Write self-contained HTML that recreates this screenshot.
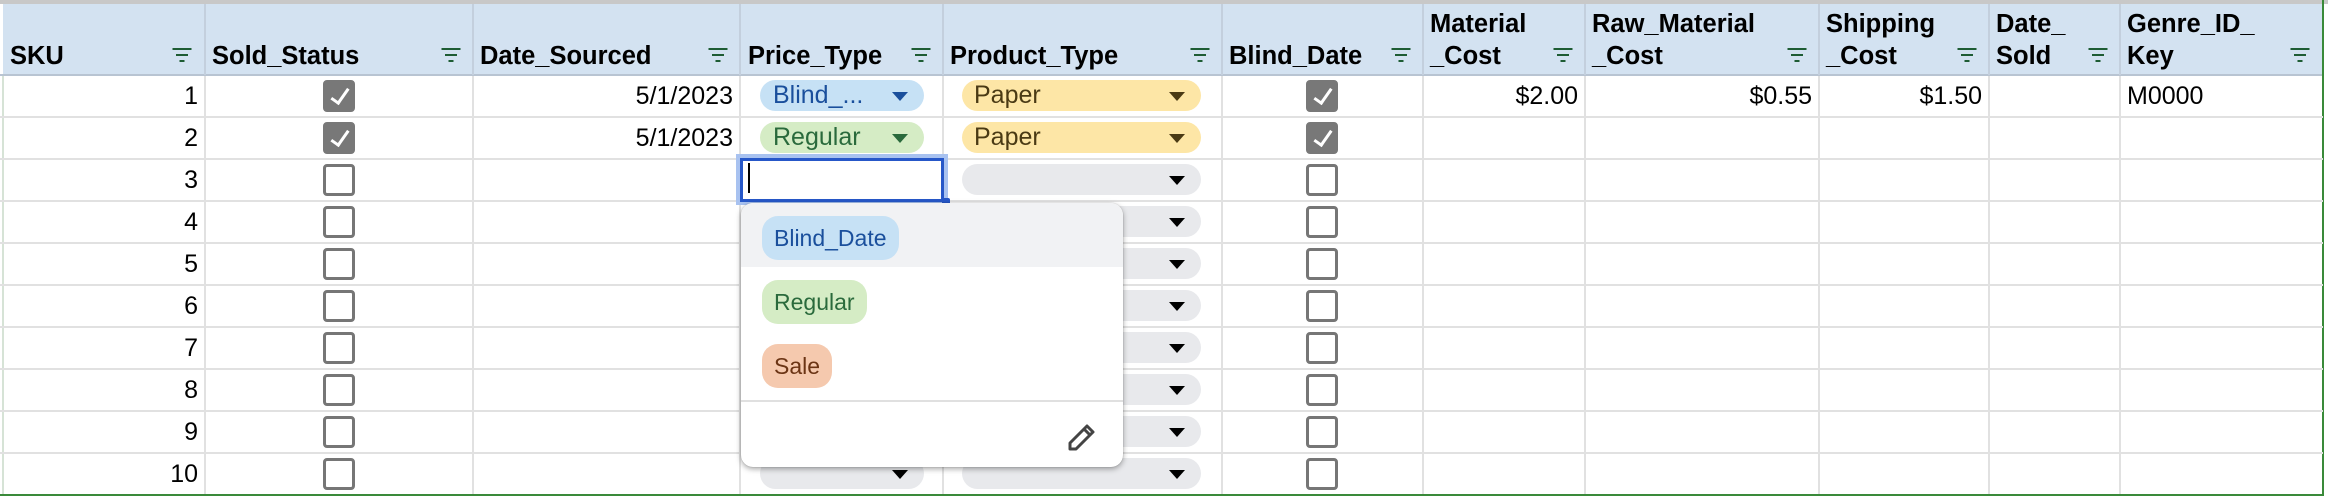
<!DOCTYPE html>
<html><head><meta charset="utf-8"><style>
*{margin:0;padding:0;box-sizing:border-box}
body{width:2328px;height:502px;background:#fff;position:relative;overflow:hidden;font-family:"Liberation Sans",Arial,sans-serif;color:#000}
.a{position:absolute}
.hd{position:absolute;top:4px;height:71px;background:#d3e2f1}
.ht{position:absolute;font-weight:bold;font-size:25.5px;line-height:32px;white-space:nowrap}
.f{position:absolute;top:48px;width:20px;height:14px}
.f i{position:absolute;height:2px;background:#1e5c34;left:50%;transform:translateX(-50%)}
.vl{position:absolute;width:2px;background:#e1e1e1}
.hl{position:absolute;height:2px;background:#e1e1e1;left:0;width:2323px}
.cb{position:absolute;width:32px;height:32px;border:3px solid #767676;border-radius:4px;background:#fff}
.cb.on{background:#787878;border-color:#787878}
.cb.on:after{content:"";position:absolute;left:9px;top:2px;width:7px;height:16px;border-right:3px solid #fff;border-bottom:3px solid #fff;transform:rotate(35deg)}
.t{position:absolute;font-size:25px;line-height:42px;white-space:nowrap}
.chip{position:absolute;height:31px;border-radius:16px;font-size:25px;line-height:31px;white-space:nowrap;padding-left:14px}
.chip b{position:absolute;right:16px;top:12px;width:0;height:0;border-left:8px solid transparent;border-right:8px solid transparent;border-top:9px solid currentColor}
.g{background:#e8e9ec;color:#000}
.pc{position:absolute;border-radius:16px;height:44px;font-size:23px;line-height:44px;padding:0 12px}
</style></head><body>
<div class="a" style="left:0;top:0;width:2328px;height:4px;background:#c8c8c8"></div>
<div class="hd" style="left:3px;width:2320px"></div>
<div class="a" style="left:0;top:74px;width:2323px;height:2px;background:#b8c4d2"></div>
<div class="a" style="left:204px;top:4px;width:2px;height:71px;background:#c3cfdd"></div>
<div class="a" style="left:472px;top:4px;width:2px;height:71px;background:#c3cfdd"></div>
<div class="a" style="left:739px;top:4px;width:2px;height:71px;background:#c3cfdd"></div>
<div class="a" style="left:942px;top:4px;width:2px;height:71px;background:#c3cfdd"></div>
<div class="a" style="left:1221px;top:4px;width:2px;height:71px;background:#c3cfdd"></div>
<div class="a" style="left:1422px;top:4px;width:2px;height:71px;background:#c3cfdd"></div>
<div class="a" style="left:1584px;top:4px;width:2px;height:71px;background:#c3cfdd"></div>
<div class="a" style="left:1818px;top:4px;width:2px;height:71px;background:#c3cfdd"></div>
<div class="a" style="left:1988px;top:4px;width:2px;height:71px;background:#c3cfdd"></div>
<div class="a" style="left:2119px;top:4px;width:2px;height:71px;background:#c3cfdd"></div>
<div class="ht" style="left:10px;top:40px">SKU</div>
<div class="ht" style="left:212px;top:40px">Sold_Status</div>
<div class="ht" style="left:480px;top:40px">Date_Sourced</div>
<div class="ht" style="left:748px;top:40px">Price_Type</div>
<div class="ht" style="left:950px;top:40px">Product_Type</div>
<div class="ht" style="left:1229px;top:40px">Blind_Date</div>
<div class="ht" style="left:1430px;top:8px">Material<br>_Cost</div>
<div class="ht" style="left:1592px;top:8px">Raw_Material<br>_Cost</div>
<div class="ht" style="left:1826px;top:8px">Shipping<br>_Cost</div>
<div class="ht" style="left:1996px;top:8px">Date_<br>Sold</div>
<div class="ht" style="left:2127px;top:8px">Genre_ID_<br>Key</div>
<div class="f" style="left:172px"><i style="top:0;width:19px"></i><i style="top:6px;width:12px"></i><i style="top:12px;width:5px"></i></div>
<div class="f" style="left:441px"><i style="top:0;width:19px"></i><i style="top:6px;width:12px"></i><i style="top:12px;width:5px"></i></div>
<div class="f" style="left:708px"><i style="top:0;width:19px"></i><i style="top:6px;width:12px"></i><i style="top:12px;width:5px"></i></div>
<div class="f" style="left:911px"><i style="top:0;width:19px"></i><i style="top:6px;width:12px"></i><i style="top:12px;width:5px"></i></div>
<div class="f" style="left:1190px"><i style="top:0;width:19px"></i><i style="top:6px;width:12px"></i><i style="top:12px;width:5px"></i></div>
<div class="f" style="left:1391px"><i style="top:0;width:19px"></i><i style="top:6px;width:12px"></i><i style="top:12px;width:5px"></i></div>
<div class="f" style="left:1553px"><i style="top:0;width:19px"></i><i style="top:6px;width:12px"></i><i style="top:12px;width:5px"></i></div>
<div class="f" style="left:1787px"><i style="top:0;width:19px"></i><i style="top:6px;width:12px"></i><i style="top:12px;width:5px"></i></div>
<div class="f" style="left:1957px"><i style="top:0;width:19px"></i><i style="top:6px;width:12px"></i><i style="top:12px;width:5px"></i></div>
<div class="f" style="left:2088px"><i style="top:0;width:19px"></i><i style="top:6px;width:12px"></i><i style="top:12px;width:5px"></i></div>
<div class="f" style="left:2290px"><i style="top:0;width:19px"></i><i style="top:6px;width:12px"></i><i style="top:12px;width:5px"></i></div>
<div class="vl" style="left:2px;top:76px;height:420px;background:#d6e3d6"></div>
<div class="vl" style="left:204px;top:76px;height:420px"></div>
<div class="vl" style="left:472px;top:76px;height:420px"></div>
<div class="vl" style="left:739px;top:76px;height:420px"></div>
<div class="vl" style="left:942px;top:76px;height:420px"></div>
<div class="vl" style="left:1221px;top:76px;height:420px"></div>
<div class="vl" style="left:1422px;top:76px;height:420px"></div>
<div class="vl" style="left:1584px;top:76px;height:420px"></div>
<div class="vl" style="left:1818px;top:76px;height:420px"></div>
<div class="vl" style="left:1988px;top:76px;height:420px"></div>
<div class="vl" style="left:2119px;top:76px;height:420px"></div>
<div class="vl" style="left:2322px;top:0;height:496px;background:#3a8a3a"></div>
<div class="hl" style="top:116px"></div>
<div class="hl" style="top:158px"></div>
<div class="hl" style="top:200px"></div>
<div class="hl" style="top:242px"></div>
<div class="hl" style="top:284px"></div>
<div class="hl" style="top:326px"></div>
<div class="hl" style="top:368px"></div>
<div class="hl" style="top:410px"></div>
<div class="hl" style="top:452px"></div>
<div class="a" style="left:0;top:494px;width:2324px;height:2px;background:#3a8a3a"></div>
<div class="t" style="right:2130px;top:75px">1</div>
<div class="t" style="right:2130px;top:117px">2</div>
<div class="t" style="right:2130px;top:159px">3</div>
<div class="t" style="right:2130px;top:201px">4</div>
<div class="t" style="right:2130px;top:243px">5</div>
<div class="t" style="right:2130px;top:285px">6</div>
<div class="t" style="right:2130px;top:327px">7</div>
<div class="t" style="right:2130px;top:369px">8</div>
<div class="t" style="right:2130px;top:411px">9</div>
<div class="t" style="right:2130px;top:453px">10</div>
<div class="cb on" style="left:323px;top:80px"></div>
<div class="cb on" style="left:323px;top:122px"></div>
<div class="cb" style="left:323px;top:164px"></div>
<div class="cb" style="left:323px;top:206px"></div>
<div class="cb" style="left:323px;top:248px"></div>
<div class="cb" style="left:323px;top:290px"></div>
<div class="cb" style="left:323px;top:332px"></div>
<div class="cb" style="left:323px;top:374px"></div>
<div class="cb" style="left:323px;top:416px"></div>
<div class="cb" style="left:323px;top:458px"></div>
<div class="cb on" style="left:1306px;top:80px"></div>
<div class="cb on" style="left:1306px;top:122px"></div>
<div class="cb" style="left:1306px;top:164px"></div>
<div class="cb" style="left:1306px;top:206px"></div>
<div class="cb" style="left:1306px;top:248px"></div>
<div class="cb" style="left:1306px;top:290px"></div>
<div class="cb" style="left:1306px;top:332px"></div>
<div class="cb" style="left:1306px;top:374px"></div>
<div class="cb" style="left:1306px;top:416px"></div>
<div class="cb" style="left:1306px;top:458px"></div>
<div class="t" style="right:1595px;top:75px">5/1/2023</div>
<div class="t" style="right:1595px;top:117px">5/1/2023</div>
<div class="t" style="right:750px;top:75px">$2.00</div>
<div class="t" style="right:516px;top:75px">$0.55</div>
<div class="t" style="right:346px;top:75px">$1.50</div>
<div class="t" style="left:2127px;top:75px">M0000</div>
<div class="chip" style="left:760px;top:80px;width:164px;background:#c6e1f5;color:#1a4f9c;padding-left:13px">Blind_...<b></b></div>
<div class="chip" style="left:760px;top:122px;width:164px;background:#d5ecc5;color:#2a6a3c;padding-left:13px">Regular<b></b></div>
<div class="chip g" style="left:760px;top:458px;width:164px"><b></b></div>
<div class="chip" style="left:962px;top:80px;width:239px;background:#fde6a6;color:#4a3a14;padding-left:12px">Paper<b></b></div>
<div class="chip" style="left:962px;top:122px;width:239px;background:#fde6a6;color:#4a3a14;padding-left:12px">Paper<b></b></div>
<div class="chip g" style="left:962px;top:164px;width:239px"><b></b></div>
<div class="chip g" style="left:962px;top:206px;width:239px"><b></b></div>
<div class="chip g" style="left:962px;top:248px;width:239px"><b></b></div>
<div class="chip g" style="left:962px;top:290px;width:239px"><b></b></div>
<div class="chip g" style="left:962px;top:332px;width:239px"><b></b></div>
<div class="chip g" style="left:962px;top:374px;width:239px"><b></b></div>
<div class="chip g" style="left:962px;top:416px;width:239px"><b></b></div>
<div class="chip g" style="left:962px;top:458px;width:239px"><b></b></div>
<div class="a" style="left:736px;top:154px;width:212px;height:51px;background:#a8c2f0"></div>
<div class="a" style="left:740px;top:158px;width:204px;height:44px;background:#fff;border:3px solid #2657c8"></div>
<div class="a" style="left:748px;top:163px;width:2px;height:30px;background:#000"></div>
<div class="a" style="left:942px;top:198px;width:8px;height:8px;background:#2657c8;border-radius:2px"></div>
<div class="a" style="left:741px;top:203px;width:382px;height:264px;background:#fff;border-radius:12px;box-shadow:0 2px 6px rgba(0,0,0,.35),0 0 1px rgba(0,0,0,.3);overflow:hidden">
 <div class="a" style="left:0;top:0;width:382px;height:64px;background:#f1f2f4"></div>
 <div class="pc" style="left:21px;top:13px;background:#c6e1f5;color:#1a4f9c">Blind_Date</div>
 <div class="pc" style="left:21px;top:77px;background:#d5ecc5;color:#2a6a3c">Regular</div>
 <div class="pc" style="left:21px;top:141px;background:#f5c9ae;color:#6b3414">Sale</div>
 <div class="a" style="left:0;top:197px;width:382px;height:2px;background:#e0e0e0"></div>
 <svg class="a" style="left:325px;top:218px" width="32" height="32" viewBox="0 0 32 32"><path d="M4 28 L4 22 L21 5 L27 11 L10 28 Z M18 8 L24 14" fill="none" stroke="#444" stroke-width="3" stroke-linejoin="round"/></svg>
</div>
</body></html>
